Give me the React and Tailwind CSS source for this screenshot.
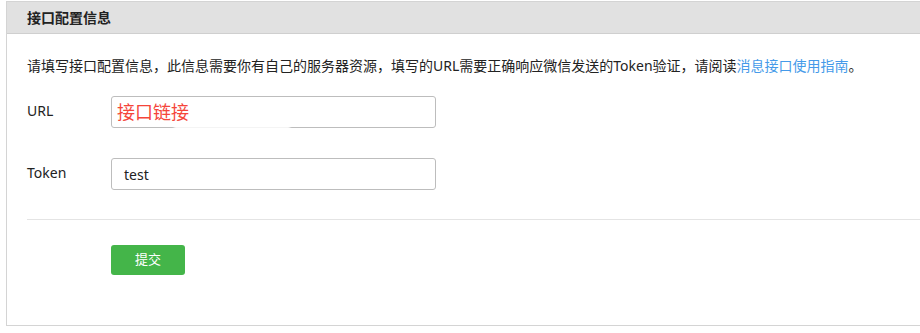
import React from 'react'

const font = { fontFamily: '"Noto Sans", "Noto Sans CJK SC", sans-serif' }

function Row({ label, children }) {
  return (
    <div className="flex items-center">
      <label className="w-[84px] pb-[3px] text-[14px] text-[#222]">{label}</label>
      {children}
    </div>
  )
}

export default function App() {
  return (
    <div className="w-[920px] h-[333px] overflow-hidden bg-white pt-[1px] pl-[6px]" style={font}>
      <div className="w-[1000px] h-[325px] border border-[#d4d4d4] bg-white">
        {/* Header */}
        <div className="h-[32px] bg-[#e1e1e1] border-b border-[#cfcfcf] pl-[20px] flex items-center">
          <h2 className="text-[14px] font-bold text-[#222] leading-none">接口配置信息</h2>
        </div>

        <div className="pl-[20px]">
          <p className="mt-[22px] text-[14px] leading-[20px] text-[#222]">
            请填写接口配置信息，此信息需要你有自己的服务器资源，填写的URL需要正确响应微信发送的Token验证，请阅读
            <a className="text-[#459ae9]">消息接口使用指南</a>。
          </p>

          <div className="mt-[20px] flex flex-col gap-[30px]">
            <Row label="URL">
              <div className="relative w-[325px] h-[32px] border border-[#bdbdbd] rounded-[3px] flex items-center pl-[5px]">
                <span className="text-[18px] text-[#f5453a] leading-none">接口链接</span>
                <div className="absolute left-[62px] bottom-[-2px] w-[116px] h-[4px] bg-white/90 blur-[1px]" />
              </div>
            </Row>
            <Row label="Token">
              <div className="w-[325px] h-[32px] border border-[#bdbdbd] rounded-[3px] flex items-center pl-[12px]">
                <span className="text-[14px] text-[#222]">test</span>
              </div>
            </Row>
          </div>

          <div className="mt-[29px] border-t border-[#e4e4e4]" />

          <div className="mt-[25px] pl-[84px]">
            <button className="w-[74px] h-[30px] rounded-[3px] bg-[#44b549] text-white text-[13px]">
              提交
            </button>
          </div>
        </div>
      </div>
    </div>
  )
}
